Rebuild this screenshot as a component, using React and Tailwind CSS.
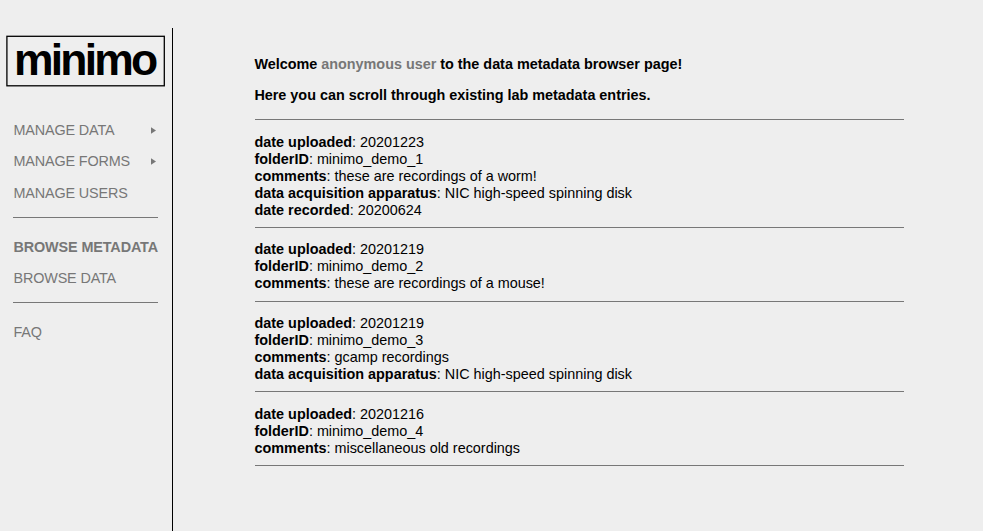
const entries = [
  { pad: "pt-[14px] pb-[8px]", rows: [["date uploaded", "20201223"], ["folderID", "minimo_demo_1"], ["comments", "these are recordings of a worm!"], ["data acquisition apparatus", "NIC high-speed spinning disk"], ["date recorded", "20200624"]] },
  { pad: "pt-[13px] pb-[9px]", rows: [["date uploaded", "20201219"], ["folderID", "minimo_demo_2"], ["comments", "these are recordings of a mouse!"]] },
  { pad: "pt-[13px] pb-[8px]", rows: [["date uploaded", "20201219"], ["folderID", "minimo_demo_3"], ["comments", "gcamp recordings"], ["data acquisition apparatus", "NIC high-speed spinning disk"]] },
  { pad: "pt-[14px] pb-[8px]", rows: [["date uploaded", "20201216"], ["folderID", "minimo_demo_4"], ["comments", "miscellaneous old recordings"]] },
];

function Logo() {
  return (
    <svg className="block h-[53px] w-[160px]" viewBox="0 0 160 53" role="img">
      <rect x="0.9" y="1.3" width="157.4" height="49.5" fill="none" stroke="black" strokeWidth="1.3" />
      <text x="8" y="39.5" className="text-[44.5px] font-bold tracking-[-2.8px]" fill="black">minimo</text>
    </svg>
  );
}

function NavItem({ children, arrow, active }) {
  return (
    <a className={`flex h-[31.2px] items-center justify-between whitespace-nowrap ${active ? "font-bold tracking-[-0.12px]" : "tracking-[-0.15px]"}`}>
      <span className="ml-[0.5px]">{children}</span>
      {arrow && (
        <svg className="mr-[2px] h-[7px] w-[5px]" viewBox="0 0 5 7" fill="currentColor"><path d="M0 0.3L5 3.5L0 6.7Z" /></svg>
      )}
    </a>
  );
}

export default function App() {
  return (
    <div className="flex h-[531px] w-full overflow-hidden bg-[#eeeeee] pt-7 font-['Liberation_Sans',Arial,sans-serif] text-[14.4px] leading-[17px] text-black">
      <aside className="w-[173px] shrink-0 border-r border-black pt-[7px] pl-[6px] text-[#777777]">
        <Logo />
        <nav className="mt-[27px] ml-[7px] w-[145px]">
          <NavItem arrow>MANAGE DATA</NavItem>
          <NavItem arrow>MANAGE FORMS</NavItem>
          <div className="pt-[0.6px]"><NavItem>MANAGE USERS</NavItem></div>
          <hr className="mt-[7.4px] mb-[14px] border-[#777777]" />
          <NavItem active>BROWSE METADATA</NavItem>
          <NavItem>BROWSE DATA</NavItem>
          <hr className="mt-[8px] mb-[14px] border-[#777777]" />
          <NavItem>FAQ</NavItem>
        </nav>
      </aside>
      <main className="ml-[82px] w-[649px] pt-[28px]">
        <p className="-ml-[0.6px] font-bold tracking-[-0.01px]">Welcome <span className="text-[#777777]">anonymous user</span> to the data metadata browser page!</p>
        <p className="mt-[14px] -ml-[0.6px] font-bold tracking-[-0.01px]">Here you can scroll through existing lab metadata entries.</p>
        <hr className="mt-[15px] border-[#777777]" />
        {entries.map(({ pad, rows }, i) => (
          <section key={i} className={`border-b border-[#777777] ${pad}`}>
            {rows.map(([k, v]) => (
              <div key={k} className="-ml-[0.5px]"><b>{k}</b>: {v}</div>
            ))}
          </section>
        ))}
      </main>
    </div>
  );
}
